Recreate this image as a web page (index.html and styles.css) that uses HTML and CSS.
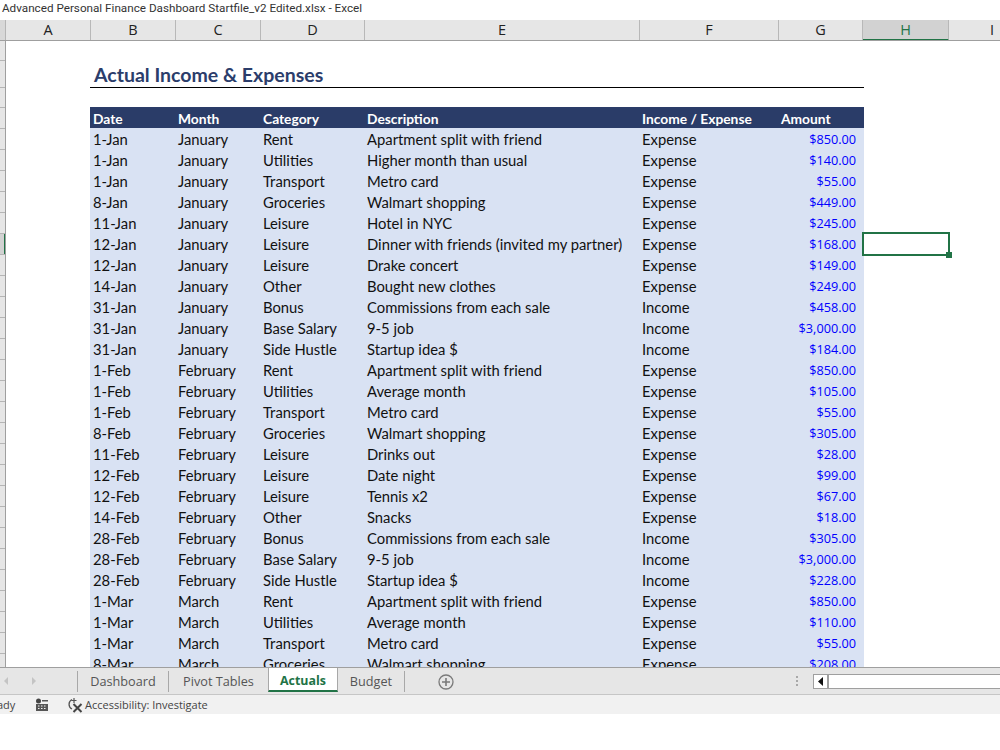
FILE: index.html
```html
<!DOCTYPE html>
<html lang="en">
<head>
<meta charset="utf-8">
<title>Advanced Personal Finance Dashboard Startfile_v2 Edited.xlsx - Excel</title>
<link rel="stylesheet" href="styles.css">
</head>
<body>
<header class="titlebar">Advanced Personal Finance Dashboard Startfile_v2 Edited.xlsx - Excel</header>
<div class="colheads">
  <div class="corner"></div>
  <div class="ch cw-a">A</div><div class="ch cw-b">B</div><div class="ch cw-c">C</div><div class="ch cw-d">D</div><div class="ch cw-e">E</div><div class="ch cw-f">F</div><div class="ch cw-g">G</div><div class="ch ch-active cw-h">H</div><div class="ch ch-last">I</div>
</div>
<main class="sheet">
  <div class="gutter">
    <div class="rh rh-20"></div><div class="rh rh-27"></div><div class="rh rh-20"></div><div class="rh rh-21"></div>
    <div class="rh rh-21"></div><div class="rh rh-21"></div><div class="rh rh-21"></div><div class="rh rh-21"></div><div class="rh rh-21"></div>
    <div class="rh rh-21 rh-active"></div>
    <div class="rh rh-21"></div><div class="rh rh-21"></div><div class="rh rh-21"></div><div class="rh rh-21"></div><div class="rh rh-21"></div><div class="rh rh-21"></div><div class="rh rh-21"></div><div class="rh rh-21"></div><div class="rh rh-21"></div><div class="rh rh-21"></div><div class="rh rh-21"></div><div class="rh rh-21"></div><div class="rh rh-21"></div><div class="rh rh-21"></div><div class="rh rh-21"></div><div class="rh rh-21"></div><div class="rh rh-21"></div><div class="rh rh-21"></div><div class="rh rh-21"></div><div class="rh rh-21"></div>
  </div>
  <div class="cells">
    <h1 class="title">Actual Income &amp; Expenses</h1>
    <table class="ledger">
      <colgroup><col class="col-b"><col class="col-c"><col class="col-d"><col class="col-e"><col class="col-f"><col class="col-g"></colgroup>
      <thead><tr><th>Date</th><th>Month</th><th>Category</th><th>Description</th><th>Income / Expense</th><th>Amount</th></tr></thead>
      <tbody>
        <tr><td>1-Jan</td><td>January</td><td>Rent</td><td>Apartment split with friend</td><td>Expense</td><td class="amt">$850.00</td></tr>
        <tr><td>1-Jan</td><td>January</td><td>Utilities</td><td>Higher month than usual</td><td>Expense</td><td class="amt">$140.00</td></tr>
        <tr><td>1-Jan</td><td>January</td><td>Transport</td><td>Metro card</td><td>Expense</td><td class="amt">$55.00</td></tr>
        <tr><td>8-Jan</td><td>January</td><td>Groceries</td><td>Walmart shopping</td><td>Expense</td><td class="amt">$449.00</td></tr>
        <tr><td>11-Jan</td><td>January</td><td>Leisure</td><td>Hotel in NYC</td><td>Expense</td><td class="amt">$245.00</td></tr>
        <tr><td>12-Jan</td><td>January</td><td>Leisure</td><td>Dinner with friends (invited my partner)</td><td>Expense</td><td class="amt">$168.00</td></tr>
        <tr><td>12-Jan</td><td>January</td><td>Leisure</td><td>Drake concert</td><td>Expense</td><td class="amt">$149.00</td></tr>
        <tr><td>14-Jan</td><td>January</td><td>Other</td><td>Bought new clothes</td><td>Expense</td><td class="amt">$249.00</td></tr>
        <tr><td>31-Jan</td><td>January</td><td>Bonus</td><td>Commissions from each sale</td><td>Income</td><td class="amt">$458.00</td></tr>
        <tr><td>31-Jan</td><td>January</td><td>Base Salary</td><td>9-5 job</td><td>Income</td><td class="amt">$3,000.00</td></tr>
        <tr><td>31-Jan</td><td>January</td><td>Side Hustle</td><td>Startup idea $</td><td>Income</td><td class="amt">$184.00</td></tr>
        <tr><td>1-Feb</td><td>February</td><td>Rent</td><td>Apartment split with friend</td><td>Expense</td><td class="amt">$850.00</td></tr>
        <tr><td>1-Feb</td><td>February</td><td>Utilities</td><td>Average month</td><td>Expense</td><td class="amt">$105.00</td></tr>
        <tr><td>1-Feb</td><td>February</td><td>Transport</td><td>Metro card</td><td>Expense</td><td class="amt">$55.00</td></tr>
        <tr><td>8-Feb</td><td>February</td><td>Groceries</td><td>Walmart shopping</td><td>Expense</td><td class="amt">$305.00</td></tr>
        <tr><td>11-Feb</td><td>February</td><td>Leisure</td><td>Drinks out</td><td>Expense</td><td class="amt">$28.00</td></tr>
        <tr><td>12-Feb</td><td>February</td><td>Leisure</td><td>Date night</td><td>Expense</td><td class="amt">$99.00</td></tr>
        <tr><td>12-Feb</td><td>February</td><td>Leisure</td><td>Tennis x2</td><td>Expense</td><td class="amt">$67.00</td></tr>
        <tr><td>14-Feb</td><td>February</td><td>Other</td><td>Snacks</td><td>Expense</td><td class="amt">$18.00</td></tr>
        <tr><td>28-Feb</td><td>February</td><td>Bonus</td><td>Commissions from each sale</td><td>Income</td><td class="amt">$305.00</td></tr>
        <tr><td>28-Feb</td><td>February</td><td>Base Salary</td><td>9-5 job</td><td>Income</td><td class="amt">$3,000.00</td></tr>
        <tr><td>28-Feb</td><td>February</td><td>Side Hustle</td><td>Startup idea $</td><td>Income</td><td class="amt">$228.00</td></tr>
        <tr><td>1-Mar</td><td>March</td><td>Rent</td><td>Apartment split with friend</td><td>Expense</td><td class="amt">$850.00</td></tr>
        <tr><td>1-Mar</td><td>March</td><td>Utilities</td><td>Average month</td><td>Expense</td><td class="amt">$110.00</td></tr>
        <tr><td>1-Mar</td><td>March</td><td>Transport</td><td>Metro card</td><td>Expense</td><td class="amt">$55.00</td></tr>
        <tr><td>8-Mar</td><td>March</td><td>Groceries</td><td>Walmart shopping</td><td>Expense</td><td class="amt">$208.00</td></tr>
      </tbody>
    </table>
    <div class="selection"><span class="fill-handle"></span></div>
  </div>
</main>
<nav class="tabbar">
  <div class="tabnav">
    <svg class="navarrow" width="8" height="10" viewBox="0 0 8 10"><path d="M6 1 2 5l4 4z"/></svg>
    <svg class="navarrow" width="8" height="10" viewBox="0 0 8 10"><path d="M2 1l4 4-4 4z"/></svg>
  </div>
  <div class="tab tab-dash">Dashboard</div>
  <div class="tab tab-pivot">Pivot Tables</div>
  <div class="tab tab-active">Actuals</div>
  <div class="tab tab-budget">Budget</div>
  <svg class="addsheet" width="16" height="16" viewBox="0 0 16 16"><circle cx="8" cy="8" r="7" fill="none" stroke="#7a7a7a" stroke-width="1.3"/><path d="M8 4v8M4 8h8" stroke="#7a7a7a" stroke-width="1.6"/></svg>
  <div class="splitter"><i></i><i></i><i></i></div>
  <div class="hscroll">
    <div class="hscroll-btn"><svg width="6" height="9" viewBox="0 0 6 9"><path d="M5 0v9L0 4.500z" fill="#111"/></svg></div>
  </div>
</nav>
<footer class="status">
  <span class="ready">Ready</span>
  <svg class="st-grid" width="14" height="14" viewBox="0 0 14 14"><circle cx="3.500" cy="3" r="2.500" fill="#444"/><path d="M7 2h6v1.500H7zM1 6h12v7H1z" fill="#555"/><path d="M3 7.500h1.500v1H3zM6 7.500h1.500v1H6zM9 7.500h1.500v1H9zM3 10h1.500v1H3zM6 10h1.500v1H6zM9 10h1.500v1H9z" fill="#f1f1f1"/></svg>
  <svg class="st-acc" width="17" height="16" viewBox="0 0 17 16"><path d="M6 2.500A5.300 5.300 0 0 0 6 12" fill="none" stroke="#555" stroke-width="1.300"/><path d="M8 1v5M5.500 3.500h5" stroke="#555" stroke-width="1.200"/><path d="M7.500 7l8 8M15.500 7l-8 8" stroke="#444" stroke-width="2"/></svg>
  <span class="st-text">Accessibility: Investigate</span>
</footer>
</body>
</html>
```
FILE: styles.css
```css
* { box-sizing: border-box; }
html, body { margin: 0; padding: 0; background: #fff; }
body { width: 1000px; height: 750px; overflow: hidden; font-family: "Lato", "Liberation Sans", sans-serif; color: #111; }

.titlebar { height: 20px; padding-left: 2px; font: 11.700px/17px "Roboto", "Liberation Sans", sans-serif; color: #333; background: #fff; white-space: nowrap; }

.colheads { display: flex; height: 21px; background: #e6e6e6; border-bottom: 1px solid #9f9f9f; overflow: hidden; }
.corner { width: 6px; flex: none; border-right: 1px solid #b5b5b5; background: #d8d8d8; }
.ch { flex: none; text-align: center; font: 14.500px/20px "Open Sans", "Liberation Sans", sans-serif; color: #222; border-right: 1px solid #b8b8b8; }
.ch-active { background: #d2d2d2; color: #217346; border-bottom: 2px solid #217346; height: 21px; }
.ch-last { width: 86px; border-right: 0; }
.cw-a { width: 85px; }
.cw-b { width: 85px; }
.cw-c { width: 85px; }
.cw-d { width: 104px; }
.cw-e { width: 275px; }
.cw-f { width: 139px; }
.cw-g { width: 84px; }
.cw-h { width: 86px; }

.sheet { display: flex; height: 626px; overflow: hidden; }
.gutter { width: 6px; flex: none; background: #e6e6e6; border-right: 1px solid #9f9f9f; overflow: hidden; }
.rh { border-bottom: 1px solid #b5b5b5; }
.rh-20 { height: 20px; }
.rh-21 { height: 21px; }
.rh-27 { height: 27px; }
.rh-active { background: #d2d2d2; position: relative; }
.rh-active::after { content: ""; position: absolute; right: -1px; top: 0; bottom: 0; width: 2px; background: #217346; }

.cells { position: relative; flex: 1; padding: 19px 0 0 84px; background: #fff; }
.title { width: 774px; height: 28px; margin: 0 0 19px; padding-left: 4px; border-bottom: 1px solid #000; font-size: 19.500px; line-height: 29px; font-weight: 700; color: #2b3d6b; white-space: nowrap; }

.ledger { border-collapse: collapse; table-layout: fixed; width: 774px; font-size: 14.800px; }
.col-b, .col-c { width: 85px; }
.col-d { width: 104px; }
.col-e { width: 275px; }
.col-f { width: 139px; }
.col-g { width: 86px; }
.ledger th { height: 21px; padding: 2px 3px 0; text-align: left; font-size: 13.800px; font-weight: 700; color: #fff; background: #2a3c68; white-space: nowrap; line-height: 19px; }
.ledger td { height: 21px; padding: 2px 3px 0; background: #d9e2f3; color: #111; white-space: nowrap; line-height: 19px; }
.ledger td.amt { text-align: right; padding-right: 8px; color: #0000ff; font-family: "Open Sans", "Liberation Sans", sans-serif; font-size: 12.700px; }

.selection { position: absolute; left: 856px; top: 191px; width: 88px; height: 24px; border: 2px solid #217346; }
.fill-handle { position: absolute; right: -4px; bottom: -4px; width: 6px; height: 6px; background: #217346; }

.tabbar { display: flex; align-items: flex-start; height: 28px; background: #e6e6e6; border-top: 1px solid #9f9f9f; border-bottom: 1px solid #c6c6c6; font: 12.700px/20px "Open Sans", "Liberation Sans", sans-serif; color: #555; }
.tabnav { width: 78px; display: flex; gap: 20px; padding: 5px 0 0 2px; flex: none; height: 21px; border-right: 1px solid #a8a8a8; margin-top: 3px; }
.navarrow { fill: #c4c4c4; }
.tab { flex: none; height: 21px; margin-top: 3px; border-right: 1px solid #a8a8a8; white-space: nowrap; text-align: center; }
.tab-dash { width: 91px; }
.tab-pivot { width: 99px; border-right: 0; }
.tab-active { width: 70px; height: 24px; margin-top: 0; padding-top: 3px; background: #fff; border-right: 1px solid #a8a8a8; border-left: 1px solid #a8a8a8; border-bottom: 2px solid #217346; color: #217346; font-size: 12.400px; font-weight: 700; }
.tab-budget { width: 67px; }
.addsheet { margin: 6px 0 0 33px; flex: none; }
.splitter { display: flex; flex-direction: column; gap: 2px; margin: 8px 0 0 342px; flex: none; }
.splitter i { display: block; width: 2px; height: 2px; background: #a8a8a8; }
.hscroll { flex: 1; height: 15px; margin: 6px 0 0 15px; background: #fff; border: 1px solid #9f9f9f; border-right: 0; }
.hscroll-btn { width: 15px; height: 13px; border-right: 2px solid #9f9f9f; display: flex; align-items: center; justify-content: center; }

.status { display: flex; align-items: center; height: 19px; background: #f1f1f1; font: 11px/19px "Open Sans", "Liberation Sans", sans-serif; color: #444; overflow: hidden; }
.ready { margin-left: -16px; width: 35px; flex: none; }
.st-grid { margin-left: 16px; flex: none; }
.st-acc { margin-left: 17px; flex: none; }
.st-text { margin-left: 2px; white-space: nowrap; }
```
